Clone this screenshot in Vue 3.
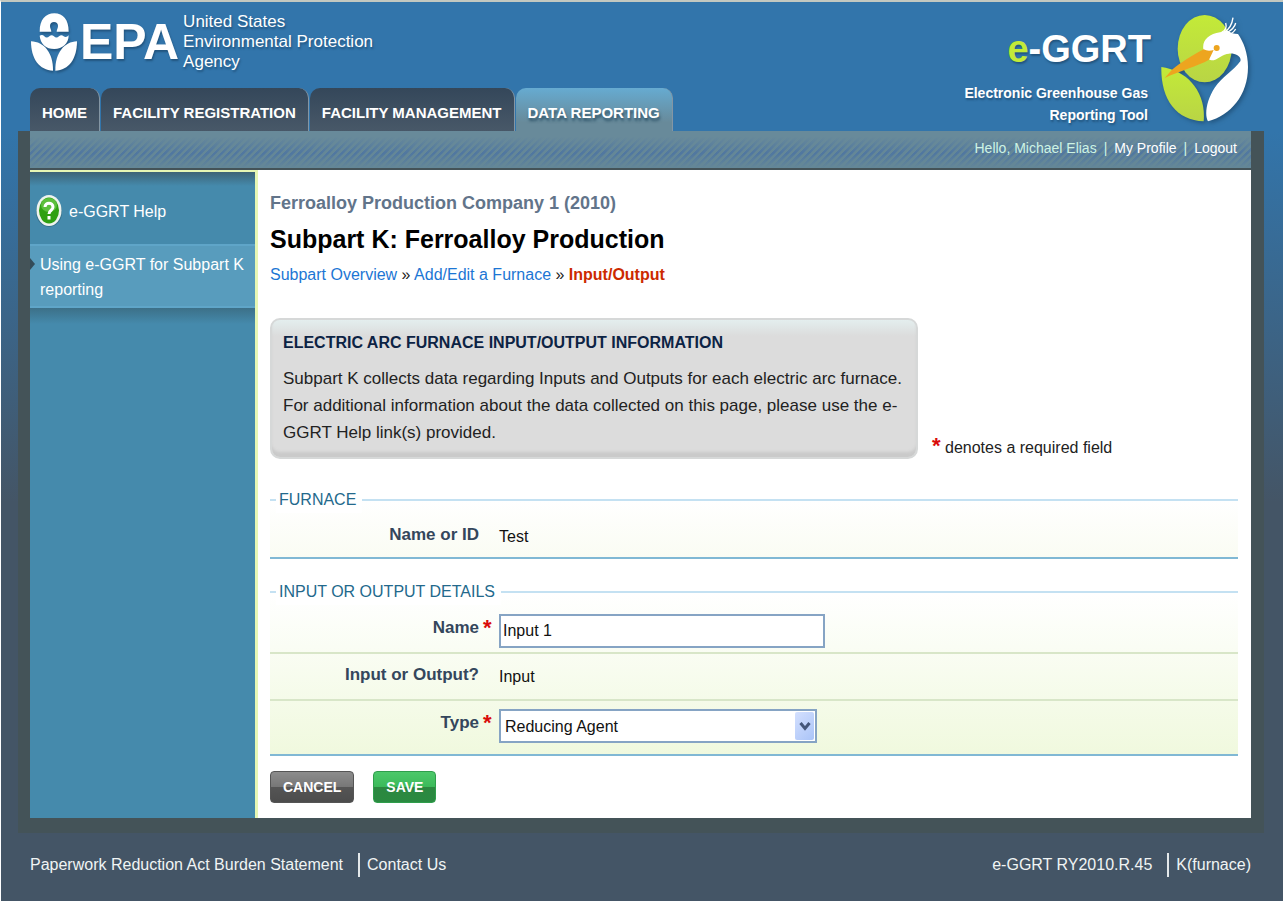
<template>
  <div class="page">
    <header class="header">
      <div class="header-left">
        <a href="#" class="epa-logo">
          <svg class="epa-flower" viewBox="90 38 144 178" aria-hidden="true">
            <path d="M119 96C119 60 136 41 163 41C190 41 206 60 206 96H170C170 90 174 86 174 79C174 71 169 67 162 67C155 67 150 71 150 79C150 86 154 90 154 96Z" />
            <path d="M119 108q8 -5 14 2q7 7 15 0q7 -7 14 0q7 7 15 0q7 -7 14 0q8 5 15 -3C206 132 187 148 163 148C138 148 121 132 119 108Z" />
            <path d="M93 125C132 126 160 160 159 213C118 212 93 178 93 125Z" />
            <path d="M231 125C193 126 165 160 166 213C206 212 231 178 231 125Z" />
          </svg>
          <span class="epa-name">EPA</span>
          <span class="epa-full">United States<br>Environmental Protection<br>Agency</span>
        </a>
        <nav class="tabs">
          <a
            v-for="tab in tabs"
            :key="tab"
            href="#"
            class="tab"
            :class="{ active: tab === activeTab }"
            @click.prevent="activeTab = tab"
          >{{ tab }}</a>
        </nav>
      </div>
      <div class="ggrt-logo">
        <div class="ggrt-text">
          <div class="ggrt-name"><span>e</span>-GGRT</div>
          <div class="ggrt-sub">Electronic Greenhouse Gas<br>Reporting Tool</div>
        </div>
        <svg class="egret" viewBox="650 35 276 339" aria-hidden="true">
          <defs>
            <linearGradient id="leaf" x1="0" y1="0" x2="0" y2="1">
              <stop offset="0" stop-color="#c3ea38" />
              <stop offset="1" stop-color="#b9d545" />
            </linearGradient>
          </defs>
          <ellipse cx="787" cy="145" rx="81" ry="101" fill="url(#leaf)" />
          <path d="M657 200C735 210 792 275 784 363C700 360 655 295 657 200Z" fill="url(#leaf)" />
          <path d="M783 146C779 120 800 101 833 96C845 93 851 92 856 91C864 97 875 101 887 101C903 124 917 158 917 200C917 285 865 345 797 363C786 345 792 300 817 262C840 229 872 213 894 183C899 168 878 158 860 160C842 160 825 180 808 180C796 178 787 165 783 146Z" fill="#fff" />
          <path d="M838 96Q856 88 850 68M846 96Q868 82 872 52M852 98Q876 86 880 68M858 102Q872 100 880 86" fill="none" stroke="#fff" stroke-width="4" />
          <path d="M667 233L689 208C715 187 750 165 784 147Q796 154 814 149L800 178C765 198 715 210 667 233Z" fill="#eda51f" />
          <circle cx="823" cy="143" r="9" fill="#eda51f" />
        </svg>
      </div>
    </header>

    <div class="frame">
      <div class="user-bar">
        <span>Hello, Michael Elias</span>
        <span>|</span>
        <a href="#">My Profile</a>
        <span>|</span>
        <a href="#">Logout</a>
      </div>

      <div class="columns">
        <aside class="sidebar">
          <a href="#" class="help-title">
            <svg class="help-icon" viewBox="0 0 26 32" aria-hidden="true">
              <ellipse cx="13" cy="17" rx="13" ry="15" fill="#35708a" />
              <ellipse cx="13" cy="15.500" rx="12.500" ry="15.500" fill="#eef3ee" />
              <ellipse cx="13" cy="15.500" rx="10" ry="13" fill="#2fa012" />
              <ellipse cx="13" cy="10" rx="8" ry="7" fill="#5cbf3c" />
              <path d="M9 12C9 7 17 7 17 12C17 15.500 13 15 13 19" fill="none" stroke="#fff" stroke-width="3" />
              <rect x="11.500" y="21" width="3" height="3.500" fill="#fff" />
            </svg>
            e-GGRT Help
          </a>
          <a href="#" class="help-link">Using e-GGRT for Subpart K reporting</a>
          <div class="sidebar-shade"></div>
        </aside>

        <main class="content">
          <p class="facility">Ferroalloy Production Company 1 (2010)</p>
          <h1>Subpart K: Ferroalloy Production</h1>
          <p class="crumbs">
            <a href="#">Subpart Overview</a> » <a href="#">Add/Edit a Furnace</a> » <strong>Input/Output</strong>
          </p>

          <div class="intro">
            <section class="info-box">
              <h2>ELECTRIC ARC FURNACE INPUT/OUTPUT INFORMATION</h2>
              <p>
                Subpart K collects data regarding Inputs and Outputs for each electric arc furnace.
                For additional information about the data collected on this page, please use the
                e-GGRT Help link(s) provided.
              </p>
            </section>
            <p class="required-note"><span class="star">*</span> denotes a required field</p>
          </div>

          <form @submit.prevent>
            <fieldset>
              <legend>FURNACE</legend>
              <div class="row">
                <span class="label"><span class="label-text">Name or ID</span></span>
                <span class="value">Test</span>
              </div>
            </fieldset>

            <fieldset class="details">
              <legend>INPUT OR OUTPUT DETAILS</legend>
              <div class="row">
                <label class="label" for="name">
                  <span class="label-text">Name</span><span class="star">*</span>
                </label>
                <input id="name" v-model="name" type="text" class="control text-input">
              </div>
              <div class="row">
                <span class="label"><span class="label-text">Input or Output?</span></span>
                <span class="value">Input</span>
              </div>
              <div class="row">
                <label class="label" for="type">
                  <span class="label-text">Type</span><span class="star">*</span>
                </label>
                <div class="select-wrap">
                  <select id="type" v-model="type" class="control">
                    <option>Reducing Agent</option>
                  </select>
                  <span class="select-arrow">
                    <svg viewBox="0 0 12 10" aria-hidden="true">
                      <path d="M1.500 2L6 7.500L10.500 2" fill="none" stroke="#44567a" stroke-width="3" />
                    </svg>
                  </span>
                </div>
              </div>
            </fieldset>

            <div class="actions">
              <button type="button" class="btn cancel">CANCEL</button>
              <button type="submit" class="btn save">SAVE</button>
            </div>
          </form>
        </main>
      </div>
    </div>

    <footer class="footer">
      <div class="footer-group">
        <a href="#">Paperwork Reduction Act Burden Statement</a>
        <a href="#">Contact Us</a>
      </div>
      <div class="footer-group">
        <span>e-GGRT RY2010.R.45</span>
        <span>K(furnace)</span>
      </div>
    </footer>
  </div>
</template>

<script setup>
import { ref } from 'vue'

const tabs = ['HOME', 'FACILITY REGISTRATION', 'FACILITY MANAGEMENT', 'DATA REPORTING']
const activeTab = ref('DATA REPORTING')
const name = ref('Input 1')
const type = ref('Reducing Agent')
</script>

<style>
body {
  margin: 0;
  background: #445566;
}
</style>

<style scoped>
.page {
  box-sizing: border-box;
  min-height: 100vh;
  border-top: 2px solid #c3c8c0;
  border-left: 1px solid #fff;
  border-bottom: 1px solid #fff;
  background: linear-gradient(#3275ab 0, #3275ab 130px, #445566 500px);
  font-family: "Liberation Sans", Arial, sans-serif;
  font-size: 16px;
  line-height: 27px;
  color: #222;
}

a {
  text-decoration: none;
}

p,
h1,
h2 {
  margin: 0;
}

.header {
  display: flex;
  justify-content: space-between;
  padding: 0 32px 0 29px;
  height: 129px;
}

.header-left {
  display: flex;
  flex-direction: column;
  justify-content: space-between;
}

.epa-logo {
  display: flex;
  align-items: center;
  padding-top: 10px;
  color: #fff;
  text-shadow: 1px 2px 2px #22557f;
}

.epa-flower {
  width: 48px;
  height: 60px;
  fill: #fff;
  filter: drop-shadow(1px 2px 1px #22557f);
}

.epa-name {
  margin: 0 4px 0 2px;
  font-size: 50px;
  line-height: 60px;
  font-weight: bold;
}

.epa-full {
  font-size: 17px;
  line-height: 20px;
}

.tabs {
  display: flex;
  gap: 1px;
}

.tab {
  box-sizing: border-box;
  height: 43px;
  padding: 0 12px;
  border-right: 1px solid #8496a4;
  border-radius: 10px 10px 0 0;
  background: linear-gradient(#34475a, #485868);
  color: #fff;
  font-size: 15px;
  line-height: 50px;
  font-weight: bold;
  white-space: nowrap;
}

.tab.active {
  background: linear-gradient(#66abd1, #688a9a 80%);
  text-shadow: 1px 3px 3px #2e5266;
}

.ggrt-logo {
  display: flex;
  gap: 8px;
  color: #fff;
}

.ggrt-text {
  padding-top: 14px;
  text-align: right;
  text-shadow: 1px 2px 2px #22557f;
}

.ggrt-name {
  font-size: 38px;
  line-height: 66px;
  font-weight: bold;
}

.ggrt-name span {
  color: #c3ea38;
}

.ggrt-sub {
  padding-right: 3px;
  font-size: 14px;
  line-height: 22px;
  font-weight: bold;
}

.egret {
  width: 92px;
  height: 113px;
  margin-top: 10px;
  filter: drop-shadow(2px 2px 2px #22557f);
}

.frame {
  margin: 0 19px 0 17px;
  padding: 0 13px 15px 12px;
  background: #445358;
}

.user-bar {
  display: flex;
  justify-content: flex-end;
  gap: 7px;
  height: 37px;
  padding-right: 14px;
  border-bottom: 2px solid #445358;
  background:
    linear-gradient(#688a9a 15%, rgba(104, 138, 154, 0) 60%, #648797),
    repeating-linear-gradient(135deg, #5077a0 0, #5077a0 2px, #648797 3px, #648797 5px);
  color: #cdf3e4;
  font-size: 14px;
  line-height: 35px;
}

.user-bar a {
  color: #fff;
}

.columns {
  display: flex;
  background: #fff;
}

.sidebar {
  flex: none;
  width: 225px;
  border-top: 2px solid #e6f6b4;
  border-right: 3px solid #e6f6b4;
  background: linear-gradient(#3d6376, #458aac 14px);
}

.help-title {
  box-sizing: border-box;
  display: flex;
  align-items: center;
  gap: 7px;
  height: 72px;
  padding: 6px 0 0 6px;
  color: #fff;
}

.help-icon {
  width: 26px;
  height: 32px;
}

.help-link {
  display: block;
  position: relative;
  padding: 6px 10px 4px;
  border-top: 2px solid #5fa5c8;
  border-bottom: 2px solid #5fa5c8;
  background: #589cbd;
  color: #fff;
  line-height: 25px;
}

.help-link::before {
  content: "";
  position: absolute;
  left: 0;
  top: 12px;
  border: 6px solid transparent;
  border-left: 5px solid #334b58;
  border-right: 0;
}

.sidebar-shade {
  height: 16px;
  background: linear-gradient(#3c7088, #458aac);
}

.content {
  flex: 1;
  min-width: 0;
  padding: 20px 12px 15px 12px;
}

.facility {
  color: #62748a;
  font-size: 18px;
  font-weight: bold;
}

h1 {
  color: #000;
  font-size: 25px;
  line-height: 44px;
}

.crumbs a {
  color: #1c76d4;
}

.crumbs strong {
  color: #cc2a00;
}

.intro {
  display: flex;
  align-items: flex-end;
  gap: 14px;
  margin-top: 30px;
}

.info-box {
  box-sizing: border-box;
  width: 648px;
  padding: 8px 8px 11px 11px;
  border: 2px solid #d6d8d8;
  border-radius: 10px;
  background: linear-gradient(#e4eeee, #dcdcdc 16px);
  box-shadow: inset 0 -6px 3px -1px #cacaca;
}

.info-box h2 {
  margin-bottom: 7px;
  color: #0c2344;
  font-size: 16px;
  line-height: 30px;
}

.info-box p {
  font-size: 17px;
}

.required-note {
  line-height: 22px;
}

.star {
  color: #d90b0b;
  font-size: 22px;
  font-weight: bold;
}

fieldset {
  min-width: 0;
  margin: 27px 1px 0 0;
  padding: 0;
  border: 0;
  border-top: 2px solid #c4e1f2;
  border-bottom: 2px solid #80b8d4;
  background: linear-gradient(#fff, #fafcf3);
}

fieldset.details {
  margin-top: 19px;
  background: linear-gradient(#fff, #f0f9de);
}

legend {
  margin-left: 6px;
  padding: 0 6px 0 3px;
  background: #fff;
  color: #23698c;
}

.row {
  display: flex;
  padding: 8px 0 4px;
}

.details .row {
  padding: 9px 0 4px;
}

.details .row + .row {
  padding: 7px 0 6px;
  border-top: 2px solid #d8e6c8;
}

.details .row:last-child {
  padding: 8px 0 11px;
}

.label {
  display: flex;
  width: 229px;
  color: #34465c;
  font-size: 17px;
  font-weight: bold;
}

.label-text {
  flex: 1;
  text-align: right;
  margin-right: 4px;
}

.label .star {
  width: 16px;
}

.label-text:last-child {
  margin-right: 20px;
}

.value {
  color: #111;
  line-height: 32px;
}

.control {
  box-sizing: border-box;
  height: 34px;
  border: 2px solid #86a4c4;
  border-radius: 0;
  background: #fff;
  color: #111;
  font: inherit;
}

.text-input {
  width: 326px;
  padding: 0 2px;
}

.select-wrap {
  position: relative;
  width: 318px;
}

.select-wrap select {
  display: block;
  width: 100%;
  padding: 0 4px;
  appearance: none;
}

.select-arrow {
  position: absolute;
  top: 3px;
  right: 3px;
  display: flex;
  align-items: center;
  justify-content: center;
  width: 19px;
  height: 28px;
  border-radius: 2px;
  background: linear-gradient(135deg, #d4e0fe, #aac4f8);
  pointer-events: none;
}

.select-arrow svg {
  width: 12px;
  height: 10px;
}

.actions {
  display: flex;
  gap: 19px;
  margin-top: 15px;
}

.btn {
  height: 32px;
  padding: 0 12px;
  border: 1px solid #555;
  border-radius: 4px;
  color: #fff;
  font: inherit;
  font-size: 14px;
  font-weight: bold;
}

.cancel {
  background: linear-gradient(#8c8c8c, #777 50%, #555 51%, #4c4c4c);
}

.save {
  border-color: #2f9e4c;
  background: linear-gradient(#4cc86a, #3cba5a 50%, #2c8840 51%, #2a8a40);
}

.footer {
  display: flex;
  justify-content: space-between;
  padding: 20px 32px 20px 29px;
}

.footer-group {
  display: flex;
  gap: 15px;
  color: #f0f4f4;
  line-height: 24px;
}

.footer-group a {
  color: #f0f4f4;
}

.footer-group > * + * {
  padding-left: 7px;
  border-left: 2px solid #e4e8ea;
}
</style>
